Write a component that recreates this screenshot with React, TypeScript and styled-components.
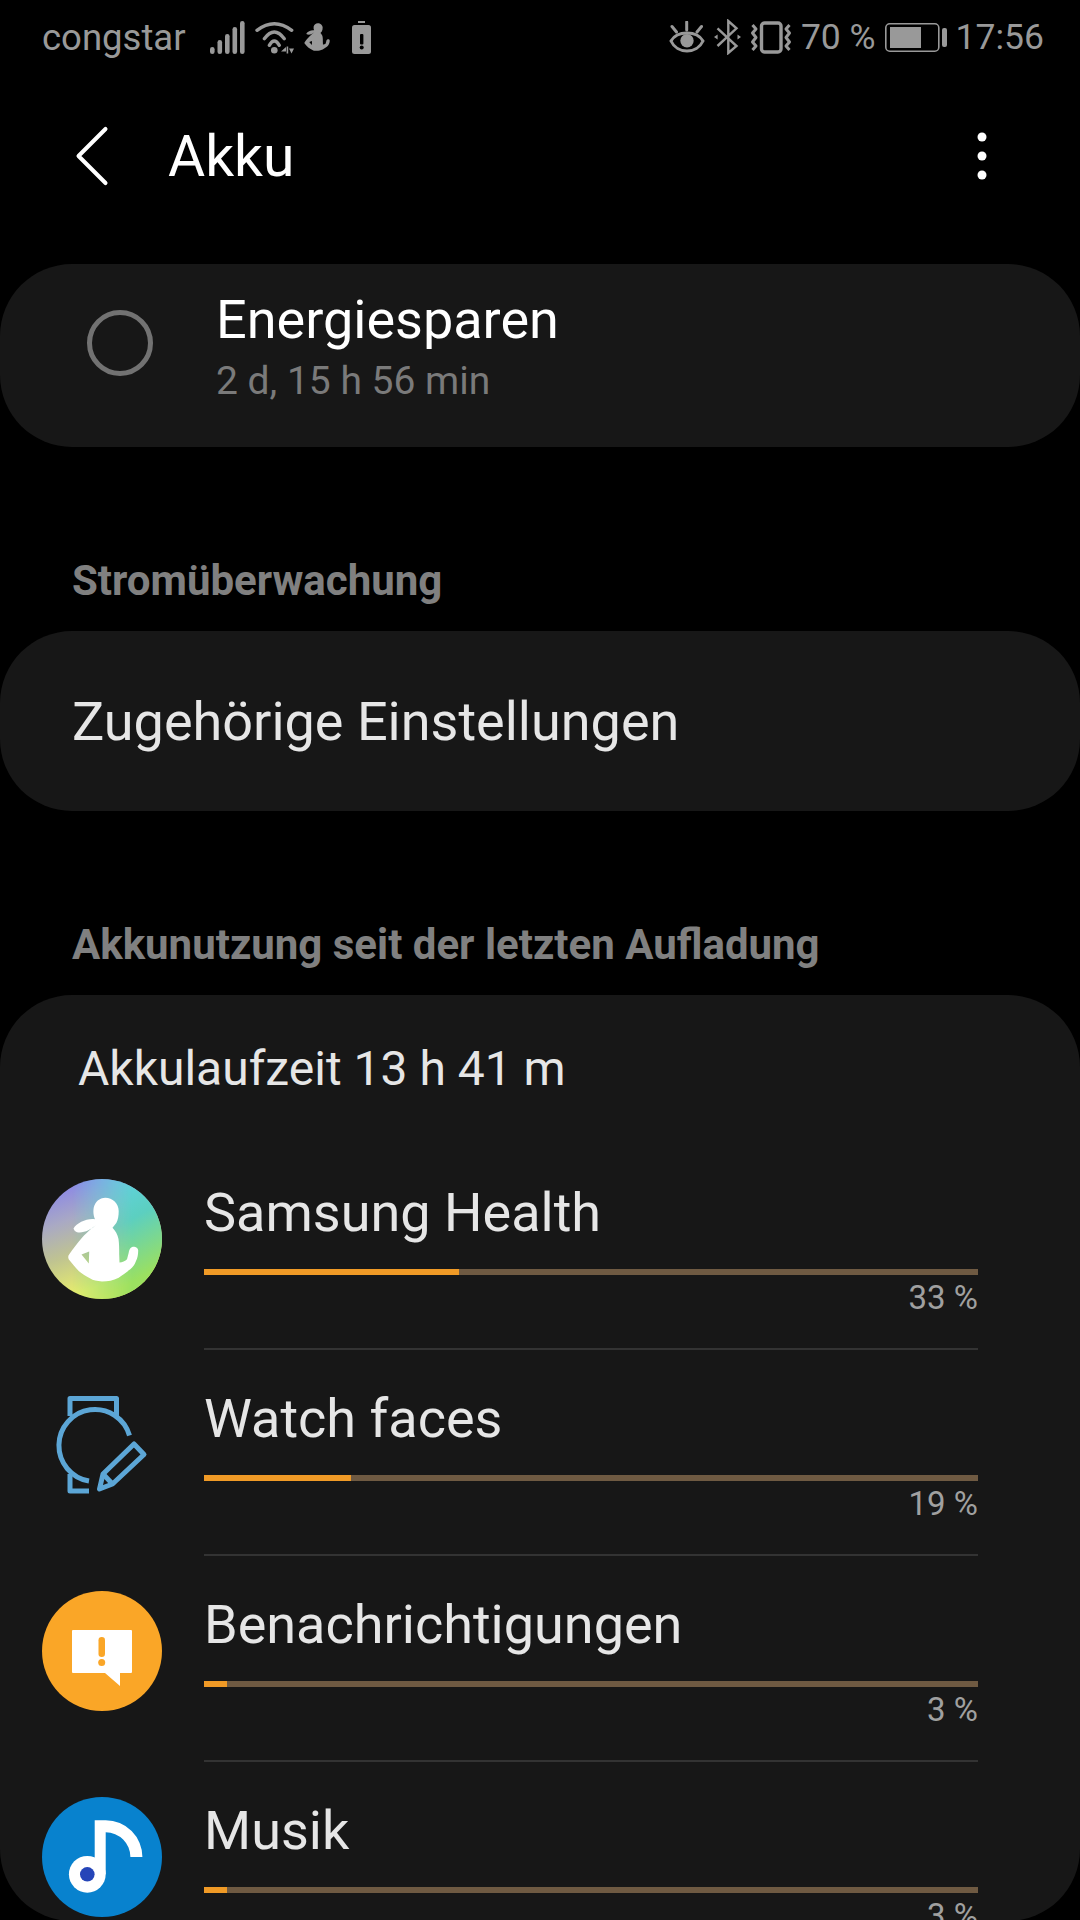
import styled, {createGlobalStyle} from 'styled-components';
import {ChevronLeft} from 'lucide-react';

interface IUsage {
  name: string;
  percent: number;
  icon: JSX.Element;
}

const GlobalStyle = createGlobalStyle`
  html, body {
    margin: 0;
    padding: 0;
    background: #000;
  }
  * {
    box-sizing: border-box;
  }
`;

// runner silhouette, shared by the status bar glyph and the health app icon
const RUNNER =
  'M63.3 18.7 C70.5 18.7 76.7 24.5 76.7 32 C76.7 37 76 41 74.3 44 L70.5 48.7 C73.5 52 75.5 55 76.5 60 C77.3 66 77.2 72 77.2 75.3 L77.5 83.5 C80 83.5 83.5 82 85 80.3 L86.7 73.7 C87 71 88.5 68 91 67.7 C93.5 67.5 96.2 69 96.2 71.5 C96.2 76 95.5 79 94 82 C92.5 86 91 88 88.3 90.3 C84 93.5 80 96.5 76.7 98.7 C71 101.5 66 102.4 60 102.4 C55 102.4 51 101.4 48.3 99.6 C44 97 40 95 36.7 92 C33 88 29.5 84 26.7 80.3 C26 78 26 77 27.3 75.3 C31 70 36 63 40 58.7 C43 55.5 46 52.5 48.3 50.5 C50 49 52 47.5 54 46.3 C49 50.5 41 54.8 35 53.2 C33 52.5 32 51 31.5 49.5 C35 44 45 39 53 40.3 C51.5 37 51 33 51.7 28.7 C53 23 57.5 18.7 63.3 18.7 Z M39.5 75.5 L46.8 84.5 L47.2 72.5 Z';

const SignalIcon = () => (
  <svg width="35" height="33" viewBox="0 0 35 33" fill="#999">
    <rect x="0" y="26" width="4.6" height="7" rx="2.3" />
    <rect x="7.5" y="19" width="4.6" height="14" rx="2.3" />
    <rect x="15" y="13" width="4.6" height="20" rx="2.3" />
    <rect x="22.5" y="6" width="4.6" height="27" rx="2.3" />
    <rect x="30" y="0" width="4.6" height="33" rx="2.3" />
  </svg>
);

const WifiIcon = () => (
  <svg width="39" height="33" viewBox="0 0 39 33" fill="none" stroke="#999" strokeWidth="3.4" strokeLinecap="round">
    <path d="M2 9.3 Q19.3 -3.9 36.7 9.3" />
    <path d="M9.3 17.7 Q19.3 4.3 29.3 17.7" />
    <path d="M14.3 24.3 Q19.3 15.7 24.3 24.3" />
    <circle cx="19.3" cy="29.3" r="3.3" fill="#999" stroke="none" />
    <path d="M31 26 L26 30.5 H31 Z" fill="#999" stroke="none" />
    <rect x="31.6" y="25.5" width="1.6" height="7" fill="#999" stroke="none" />
    <path d="M34 27.5 h5 l-2.5 5 z" fill="#999" stroke="none" />
  </svg>
);

const RunnerSmallIcon = () => (
  <svg width="26" height="28" viewBox="25 18 72 85" fill="#999" fillRule="evenodd" preserveAspectRatio="none">
    <path d={RUNNER} />
  </svg>
);

const BatteryAlertIcon = () => (
  <svg width="19" height="34" viewBox="0 0 19 34">
    <rect x="6" y="1" width="7" height="2" fill="#999" />
    <rect x="0" y="5" width="19" height="29" rx="2.5" fill="#999" />
    <rect x="8" y="14" width="3.4" height="10.5" rx="1" fill="#000" />
    <circle cx="9.7" cy="27.5" r="2" fill="#000" />
  </svg>
);

const EyeIcon = () => (
  <svg width="36" height="32" viewBox="0 0 36 32" fill="none" stroke="#999" strokeWidth="3">
    <path d="M2 20 C8 9.3 28 9.3 34 20 C28 33.3 8 33.3 2 20 Z" />
    <circle cx="18" cy="19.7" r="6.7" fill="#999" stroke="none" />
    <path d="M17.7 1 V9 M3 5.5 L7.5 11 M32.5 5.5 L28 11" strokeLinecap="round" />
  </svg>
);

const BluetoothIcon = () => (
  <svg width="27" height="36" viewBox="0 0 27 36" fill="none" stroke="#999" strokeWidth="2.4">
    <path d="M3.5 9.3 L22.5 27 L14.3 34 V2 L22.5 9.3 L3.5 27" />
    <path d="M3.6 15.5 L0 18 L3.6 20.5 Z" fill="#999" stroke="none" />
    <path d="M23.5 15.5 L27 18 L23.5 20.5 Z" fill="#999" stroke="none" />
  </svg>
);

const VibrateIcon = () => (
  <svg width="42" height="33" viewBox="0 0 42 33" fill="none" stroke="#999" strokeLinejoin="round">
    <rect x="11.5" y="2" width="19.5" height="29" rx="3" strokeWidth="3.4" />
    <path d="M2.5 4 L6 8 L2.5 12 L6 16.5 L2.5 21 L6 25 L2.5 29" strokeWidth="3" />
    <path d="M39.5 4 L36 8 L39.5 12 L36 16.5 L39.5 21 L36 25 L39.5 29" strokeWidth="3" />
  </svg>
);

const BatteryIcon = () => (
  <svg width="62" height="29" viewBox="0 0 62 29">
    <rect x="0.8" y="0.8" width="53" height="27.4" rx="4" fill="none" stroke="#999" strokeWidth="1.6" />
    <rect x="5" y="4" width="31" height="21" fill="#999" />
    <rect x="57" y="5" width="5" height="19" rx="2" fill="#999" />
  </svg>
);

const MoreIcon = () => (
  <svg width="10" height="48" viewBox="0 0 10 48" fill="#fff">
    <circle cx="5" cy="5" r="4.5" />
    <circle cx="5" cy="24" r="4.5" />
    <circle cx="5" cy="43" r="4.5" />
  </svg>
);

const HealthIcon = () => (
  <svg width="120" height="120" viewBox="0 0 120 120">
    <defs>
      <linearGradient id="health" x1="0.3" y1="0" x2="0.65" y2="1">
        <stop offset="0" stopColor="#8a86e8" />
        <stop offset="0.28" stopColor="#a9a9c4" />
        <stop offset="0.55" stopColor="#c0c490" />
        <stop offset="0.85" stopColor="#e8ee6c" />
      </linearGradient>
      <linearGradient id="healthRight" x1="0" y1="0.1" x2="0.5" y2="1">
        <stop offset="0" stopColor="#62d4f4" />
        <stop offset="0.55" stopColor="#5ccfc0" />
        <stop offset="1" stopColor="#9be060" />
      </linearGradient>
      <linearGradient id="fade" x1="0" y1="0" x2="1" y2="0">
        <stop offset="0.25" stopColor="#000" />
        <stop offset="0.75" stopColor="#fff" />
      </linearGradient>
      <mask id="healthMask">
        <rect width="120" height="120" fill="url(#fade)" />
      </mask>
    </defs>
    <circle cx="60" cy="60" r="60" fill="url(#health)" />
    <circle cx="60" cy="60" r="60" fill="url(#healthRight)" mask="url(#healthMask)" />
    <path fill="#fff" fillRule="evenodd" d={RUNNER} />
  </svg>
);

const WatchFacesIcon = () => (
  <svg width="92" height="98" viewBox="0 0 92 98" fill="none" stroke="#5ca6d6" strokeWidth="5" strokeLinejoin="round">
    <path d="M14 20 V2.5 H60.5 V20" />
    <path d="M73.5 39.5 A36 36 0 1 0 33 85" />
    <path d="M14 78 V95 H33" />
    <path d="M78 48 L88 58.5 L56.5 88 L43.5 93 L47 78 Z" />
    <path d="M47 78 L56.5 88" />
  </svg>
);

const AlertIcon = () => (
  <svg width="120" height="120" viewBox="0 0 120 120">
    <circle cx="60" cy="60" r="60" fill="#faa627" />
    <path fill="#fff" d="M31 39 H89 Q90 39 90 40 V81 Q90 82 89 82 H78 V95 L63 82 H31 Q30 82 30 81 V40 Q30 39 31 39 Z" />
    <rect x="56.5" y="46" width="6.5" height="20" rx="3.2" fill="#faa627" />
    <circle cx="59.7" cy="71.5" r="3.5" fill="#faa627" />
  </svg>
);

const MusicIcon = () => (
  <svg width="120" height="120" viewBox="0 0 120 120">
    <circle cx="60" cy="60" r="60" fill="#0882ce" />
    <path fill="#fff" d="M52.7 23.3 H63.7 A36.7 36.7 0 0 1 100.4 60 H88.4 A24.7 24.7 0 0 0 63.7 35.3 V77 H52.7 Z" />
    <circle cx="45.3" cy="77.3" r="18.4" fill="#fff" />
    <circle cx="45.3" cy="77.3" r="7.3" fill="#2545b8" />
  </svg>
);

const usage: IUsage[] = [
  {name: 'Samsung Health', percent: 33, icon: <HealthIcon />},
  {name: 'Watch faces', percent: 19, icon: <WatchFacesIcon />},
  {name: 'Benachrichtigungen', percent: 3, icon: <AlertIcon />},
  {name: 'Musik', percent: 3, icon: <MusicIcon />},
];

const App = (): JSX.Element => {
  return (
    <Page>
      <GlobalStyle />
      <StatusBar>
        <StatusGroup>
          <Carrier>congstar</Carrier>
          <SignalIcon />
          <WifiIcon />
          <RunnerSmallIcon />
          <AlertSlot>
            <BatteryAlertIcon />
          </AlertSlot>
        </StatusGroup>
        <StatusGroup $tight>
          <EyeIcon />
          <BluetoothIcon />
          <VibrateIcon />
          <StatusText>70 %</StatusText>
          <BatteryIcon />
          <StatusText>17:56</StatusText>
        </StatusGroup>
      </StatusBar>

      <Toolbar>
        <BackButton>
          <ChevronLeft size={108} strokeWidth={0.9} color="#fff" />
        </BackButton>
        <Title>Akku</Title>
        <MoreIcon />
      </Toolbar>

      <PowerCard>
        <Radio />
        <PowerText>
          <PowerTitle>Energiesparen</PowerTitle>
          <PowerSub>2 d, 15 h 56 min</PowerSub>
        </PowerText>
      </PowerCard>

      <SectionLabel>Stromüberwachung</SectionLabel>
      <SettingsCard>Zugehörige Einstellungen</SettingsCard>

      <SectionLabel>Akkunutzung seit der letzten Aufladung</SectionLabel>
      <UsageCard>
        <Runtime>Akkulaufzeit 13 h 41 m</Runtime>
        {usage.map((el, i) => (
          <UsageRow key={el.name}>
            <IconSlot>{el.icon}</IconSlot>
            <RowBody $last={i === usage.length - 1}>
              <AppName>{el.name}</AppName>
              <Track>
                <Fill style={{width: `${el.percent}%`}} />
              </Track>
              <Percent>{el.percent} %</Percent>
            </RowBody>
          </UsageRow>
        ))}
      </UsageCard>
    </Page>
  );
};

export default App;

const Page = styled.div`
  width: 1080px;
  height: 1920px;
  overflow: hidden;
  background: #000;
  font-family: Roboto, sans-serif;
  color: #e6e6e6;
`;

const StatusBar = styled.div`
  display: flex;
  justify-content: space-between;
  align-items: center;
  height: 74px;
  padding: 0 36px 0 42px;
`;

const StatusGroup = styled.div<{$tight?: boolean}>`
  display: flex;
  align-items: center;
  gap: ${({$tight}) => ($tight ? '9px' : '10px')};
`;

const Carrier = styled.span`
  font-size: 36.5px;
  color: #999;
  margin-right: 14px;
`;

const AlertSlot = styled.span`
  display: flex;
  margin-left: 12px;
`;

const StatusText = styled.span`
  font-size: 35.5px;
  color: #999;
`;

const Toolbar = styled.div`
  display: flex;
  align-items: center;
  height: 164px;
  padding: 0 93px 0 38px;
`;

const BackButton = styled.div`
  display: flex;
  width: 130px;
`;

const Title = styled.h1`
  flex: 1;
  margin: 0;
  font-size: 57px;
  font-weight: 400;
  color: #fff;
`;

const PowerCard = styled.section`
  display: flex;
  align-items: center;
  gap: 63px;
  height: 183px;
  margin-top: 26px;
  padding: 0 87px 25px;
  border-radius: 72px;
  background: #171717;
`;

const Radio = styled.span`
  display: block;
  flex: none;
  width: 66px;
  height: 66px;
  border: 5px solid #727272;
  border-radius: 50%;
`;

const PowerText = styled.div`
  padding-top: 7px;
`;

const PowerTitle = styled.div`
  font-size: 54px;
  line-height: 60px;
  color: #fff;
`;

const PowerSub = styled.div`
  margin-top: 9px;
  font-size: 39px;
  line-height: 44px;
  color: #7a7a7a;
`;

const SectionLabel = styled.h2`
  margin: 0;
  padding: 112px 0 0 72px;
  height: 184px;
  font-size: 42px;
  line-height: 44px;
  font-weight: 700;
  color: #808080;
`;

const SettingsCard = styled.section`
  display: flex;
  align-items: center;
  height: 180px;
  padding: 0 72px;
  border-radius: 72px;
  background: #171717;
  font-size: 54px;
`;

const UsageCard = styled.section`
  height: 926px;
  padding-top: 47px;
  border-radius: 72px;
  background: #171717;
`;

const Runtime = styled.div`
  height: 102px;
  padding-left: 78px;
  font-size: 48px;
  line-height: 54px;
`;

const UsageRow = styled.div`
  display: flex;
  height: 206px;
  padding: 0 102px 0 42px;
`;

const IconSlot = styled.div`
  display: flex;
  justify-content: center;
  align-items: center;
  flex: none;
  width: 120px;
  height: 120px;
  margin: 35px 42px 0 0;
`;

const RowBody = styled.div<{$last?: boolean}>`
  flex: 1;
  padding-top: 39px;
  border-bottom: ${({$last}) => ($last ? 'none' : '2px solid #333')};
`;

const AppName = styled.div`
  font-size: 54px;
  line-height: 60px;
`;

const Track = styled.div`
  height: 6px;
  margin-top: 26px;
  background: #6f5a42;
`;

const Fill = styled.div`
  height: 100%;
  background: #f09a26;
`;

const Percent = styled.div`
  margin-top: 5px;
  text-align: right;
  font-size: 33px;
  line-height: 36px;
  color: #a0a0a0;
`;
